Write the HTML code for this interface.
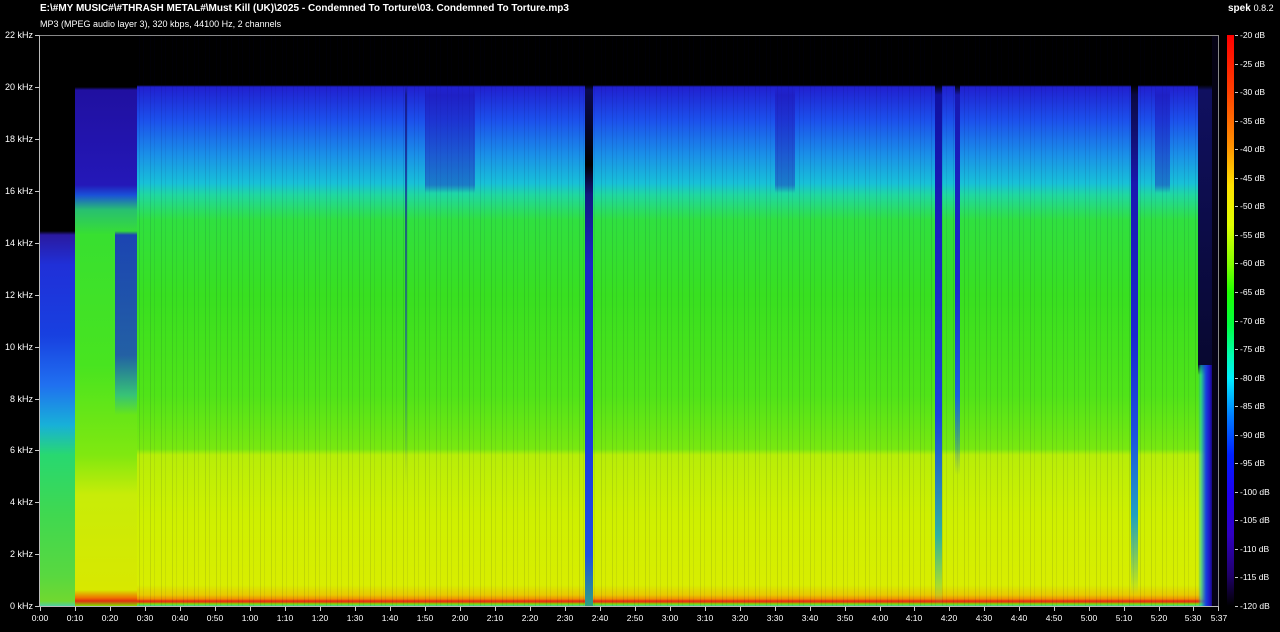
<!DOCTYPE html>
<html><head><meta charset="utf-8"><style>
body{margin:0;background:#000;width:1280px;height:632px;overflow:hidden;position:relative;font-family:"Liberation Sans",sans-serif;color:#fff}
.a{position:absolute}
.t{font-size:9px;white-space:nowrap}
#plot{left:40px;top:35px;width:1178px;height:571px;overflow:hidden;
background:linear-gradient(to bottom,#000 0,#000 50px,#2020d0 52px,#1c50ec 85px,#1a90e8 120px,#18c0d8 148px,#20d8a0 160px,#30e040 185px,#38e020 260px,#50e418 360px,#78e810 414px,#b8ee08 420px,#cef000 480px,#d8ee00 550px,#e8c800 560px,#f09000 564px,#e83010 566px,#e04010 567px,#80e000 569px,#40d0a0 571px)}
.s{position:absolute;top:0;height:571px}
#frame{left:40px;top:35px;width:1179px;height:571px;border:1px solid #888;border-left:none;border-bottom:none;box-sizing:border-box}
</style></head><body>
<div class="a" style="left:40px;top:3px;font-size:10px;font-weight:bold">E:\#MY MUSIC#\#THRASH METAL#\Must Kill (UK)\2025 - Condemned To Torture\03. Condemned To Torture.mp3</div>
<div class="a t" style="left:40px;top:19px">MP3 (MPEG audio layer 3), 320 kbps, 44100 Hz, 2 channels</div>
<div class="a" style="left:1228px;top:3px;font-size:10px;font-weight:bold">spek <span style="font-weight:normal;font-size:9px">0.8.2</span></div>

<div id="plot" class="a">
 <div class="s" style="left:0;width:1178px;background:repeating-linear-gradient(to right,rgba(0,0,60,.1) 0 1px,rgba(0,0,0,0) 1px 4px,rgba(0,0,80,.07) 4px 5px,rgba(0,0,0,0) 5px 11px);"></div>
 <!-- left intro -->
 <div class="s" style="left:0;width:35px;background:linear-gradient(to bottom,#000 0,#000 196px,#2a1aa0 200px,#2030d8 230px,#1840e0 300px,#2070f0 350px,#18b0d8 390px,#28d870 420px,#40d850 480px,#58d840 540px,#70d830 566px,#50d0a0 571px)"></div>
 <div class="s" style="left:35px;width:62px;background:linear-gradient(to bottom,#000 0,#000 52px,#2010a0 55px,#2418b8 150px,#1a50d8 160px,#28c070 175px,#38e030 200px,#48e420 330px,#80e810 420px,#c8ec08 460px,#d8e800 555px,#f07000 563px,#e03010 566px,#80e000 571px)"></div>
 <div class="s" style="left:75px;width:22px;background:linear-gradient(to bottom,rgba(0,0,0,0) 0,rgba(0,0,0,0) 196px,rgba(20,30,210,.8) 200px,rgba(20,40,220,.7) 320px,rgba(20,160,210,.5) 360px,rgba(0,0,0,0) 380px)"></div>
 <!-- dark stripes -->
 <div class="s" style="left:545px;width:8px;background:linear-gradient(to bottom,#000 0,#000 50px,#0a0a50 55px,#000 130px,#101880 160px,#1a28c8 230px,#1a38e0 400px,#2050e0 520px,#30a080 571px)"></div>
 <div class="s" style="left:895px;width:7px;background:linear-gradient(to bottom,#000 0,#000 50px,#1010a0 60px,#1a20c0 200px,#1a40e0 380px,#30b0a0 500px,rgba(60,220,60,0) 571px)"></div>
 <div class="s" style="left:915px;width:5px;background:linear-gradient(to bottom,#000 0,#000 50px,#1818b0 60px,#1a28d0 250px,#1a60e0 360px,rgba(60,220,60,0) 440px)"></div>
 <div class="s" style="left:1091px;width:7px;background:linear-gradient(to bottom,#000 0,#000 50px,#0a0840 60px,#1a18b0 150px,#1a28d0 300px,#1c50e0 400px,#20a0c0 480px,rgba(60,220,60,0) 560px)"></div>
 <div class="s" style="left:365px;width:2px;background:linear-gradient(to bottom,rgba(0,0,0,0) 50px,rgba(20,20,120,.8) 60px,rgba(20,40,200,.5) 300px,rgba(0,0,0,0) 450px)"></div>
 <div class="s" style="left:385px;width:50px;background:linear-gradient(to bottom,rgba(0,0,0,0) 52px,rgba(30,20,180,.5) 60px,rgba(30,20,180,.4) 150px,rgba(0,0,0,0) 158px)"></div>
 <div class="s" style="left:735px;width:20px;background:linear-gradient(to bottom,rgba(0,0,0,0) 52px,rgba(30,20,180,.5) 60px,rgba(30,20,180,.4) 150px,rgba(0,0,0,0) 158px)"></div>
 <div class="s" style="left:1115px;width:15px;background:linear-gradient(to bottom,rgba(0,0,0,0) 52px,rgba(30,20,180,.5) 60px,rgba(30,20,180,.4) 150px,rgba(0,0,0,0) 158px)"></div>
 <!-- right end -->
 <div class="s" style="left:1158px;width:20px;background:linear-gradient(to bottom,#000 0,#000 50px,#101060 55px,#080830 330px,rgba(8,8,48,0) 340px)"></div>
 <div class="s" style="left:1158px;width:20px;top:330px;height:241px;background:linear-gradient(to right,rgba(0,0,0,0) 0,rgba(20,200,200,.6) 3px,#1840e0 8px,#2010c0 12px,#06020f 17px)"></div>
 <div class="s" style="left:1172px;width:6px;background:#050214"></div>
</div>
<div id="frame" class="a"></div>
<div class="a" style="left:39px;top:35px;width:1px;height:572px;background:#bbb"></div>
<div class="a" style="left:39px;top:606px;width:1180px;height:1px;background:#bbb"></div>

<div class="a t" style="right:1247px;top:30px">22 kHz</div>
<div class="a t" style="right:1247px;top:82px">20 kHz</div>
<div class="a t" style="right:1247px;top:134px">18 kHz</div>
<div class="a t" style="right:1247px;top:186px">16 kHz</div>
<div class="a t" style="right:1247px;top:238px">14 kHz</div>
<div class="a t" style="right:1247px;top:290px">12 kHz</div>
<div class="a t" style="right:1247px;top:342px">10 kHz</div>
<div class="a t" style="right:1247px;top:394px">8 kHz</div>
<div class="a t" style="right:1247px;top:445px">6 kHz</div>
<div class="a t" style="right:1247px;top:497px">4 kHz</div>
<div class="a t" style="right:1247px;top:549px">2 kHz</div>
<div class="a t" style="right:1247px;top:601px">0 kHz</div>
<svg class="a" style="left:0;top:0" width="1280" height="632">
<g stroke="#ccc" stroke-width="1">
<path d="M35 35.5h4M35 87.5h4M35 139.5h4M35 191.5h4M35 243.5h4M35 295.5h4M35 347.5h4M35 399.5h4M35 450.5h4M35 502.5h4M35 554.5h4M35 606.5h4"/>
<path d="M40.5 607v4M75.5 607v4M110.5 607v4M145.5 607v4M180.5 607v4M215.5 607v4M250.5 607v4M285.5 607v4M320.5 607v4M355.5 607v4M390.5 607v4M425.5 607v4M460.5 607v4M495.5 607v4M530.5 607v4M565.5 607v4M600.5 607v4M635.5 607v4M670.5 607v4M705.5 607v4M740.5 607v4M775.5 607v4M810.5 607v4M845.5 607v4M880.5 607v4M914.5 607v4M949.5 607v4M984.5 607v4M1019.5 607v4M1054.5 607v4M1089.5 607v4M1124.5 607v4M1159.5 607v4M1193.5 607v4M1218.5 607v4"/>
<path d="M1235 35.5h3M1235 64.5h3M1235 92.5h3M1235 121.5h3M1235 149.5h3M1235 178.5h3M1235 206.5h3M1235 235.5h3M1235 263.5h3M1235 292.5h3M1235 321.5h3M1235 349.5h3M1235 378.5h3M1235 406.5h3M1235 435.5h3M1235 463.5h3M1235 492.5h3M1235 520.5h3M1235 549.5h3M1235 577.5h3M1235 606.5h3"/>
</g>
<g fill="#fff" font-size="8.5" font-family="Liberation Sans" text-anchor="middle">
<text x="40" y="621">0:00</text><text x="75" y="621">0:10</text><text x="110" y="621">0:20</text><text x="145" y="621">0:30</text><text x="180" y="621">0:40</text><text x="215" y="621">0:50</text><text x="250" y="621">1:00</text><text x="285" y="621">1:10</text><text x="320" y="621">1:20</text><text x="355" y="621">1:30</text><text x="390" y="621">1:40</text><text x="425" y="621">1:50</text><text x="460" y="621">2:00</text><text x="495" y="621">2:10</text><text x="530" y="621">2:20</text><text x="565" y="621">2:30</text><text x="600" y="621">2:40</text><text x="635" y="621">2:50</text><text x="670" y="621">3:00</text><text x="705" y="621">3:10</text><text x="740" y="621">3:20</text><text x="775" y="621">3:30</text><text x="810" y="621">3:40</text><text x="845" y="621">3:50</text><text x="880" y="621">4:00</text><text x="914" y="621">4:10</text><text x="949" y="621">4:20</text><text x="984" y="621">4:30</text><text x="1019" y="621">4:40</text><text x="1054" y="621">4:50</text><text x="1089" y="621">5:00</text><text x="1124" y="621">5:10</text><text x="1159" y="621">5:20</text><text x="1193" y="621">5:30</text><text x="1219" y="621">5:37</text>
</g>
<g fill="#fff" font-size="8.5" font-family="Liberation Sans">
<text x="1240" y="38">-20 dB</text><text x="1240" y="67">-25 dB</text><text x="1240" y="95">-30 dB</text><text x="1240" y="124">-35 dB</text><text x="1240" y="152">-40 dB</text><text x="1240" y="181">-45 dB</text><text x="1240" y="209">-50 dB</text><text x="1240" y="238">-55 dB</text><text x="1240" y="266">-60 dB</text><text x="1240" y="295">-65 dB</text><text x="1240" y="324">-70 dB</text><text x="1240" y="352">-75 dB</text><text x="1240" y="381">-80 dB</text><text x="1240" y="409">-85 dB</text><text x="1240" y="438">-90 dB</text><text x="1240" y="466">-95 dB</text><text x="1240" y="495">-100 dB</text><text x="1240" y="523">-105 dB</text><text x="1240" y="552">-110 dB</text><text x="1240" y="580">-115 dB</text><text x="1240" y="609">-120 dB</text>
</g>
</svg>
<div class="a" style="left:1227px;top:35px;width:7px;height:571px;background:linear-gradient(to bottom,#ff0000 0,#ff4000 57px,#ff9000 110px,#ffe000 150px,#e0ff00 190px,#80ff00 230px,#20ff00 257px,#00ff40 290px,#00ffb0 320px,#00f0ff 343px,#0080ff 380px,#0020ff 420px,#2000f0 460px,#3000c0 500px,#20006a 540px,#000 571px)"></div>
</body></html>
